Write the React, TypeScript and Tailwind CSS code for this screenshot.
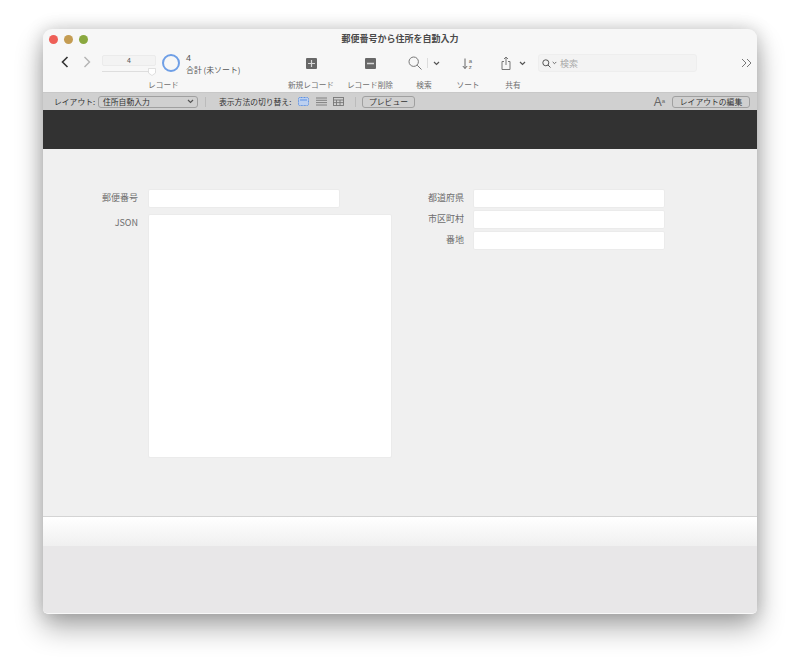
import React from "react";

const font = { fontFamily: '"Noto Sans CJK JP", "Liberation Sans", sans-serif' };

function ToolItem({ w, label, children }: { w: string; label: string; children: React.ReactNode }) {
  return (
    <div className={`flex flex-col items-center ${w}`}>
      <div className="h-[26px] flex items-center justify-center">{children}</div>
      <div className="mt-[3px] text-[7.7px] leading-[12px] text-[#6f6f6f] whitespace-nowrap">{label}</div>
    </div>
  );
}

function Chevron({ className }: { className?: string }) {
  return (
    <svg className={className} width="7" height="5" viewBox="0 0 7 5" fill="none" stroke="#555" strokeWidth="1.2">
      <path d="M1 1l2.5 2.5L6 1" />
    </svg>
  );
}

function Field({ label, w, h, mt }: { label: string; w: string; h: string; mt?: string }) {
  return (
    <div className={`flex items-start ${mt ?? ""}`}>
      <div className="w-[60px] text-right text-[9px] leading-[17px] text-[#6e6e6e] whitespace-nowrap">{label}</div>
      <div className={`ml-[10px] bg-white rounded-[2px] border border-[#ebebeb] ${w} ${h}`} />
    </div>
  );
}

function RightField({ label, mt }: { label: string; mt?: string }) {
  return (
    <div className={`flex items-start ${mt ?? ""}`}>
      <div className="w-[52px] text-right text-[9px] leading-[17px] text-[#6e6e6e] whitespace-nowrap">{label}</div>
      <div className="ml-[9px] w-[192px] h-[19px] bg-white rounded-[2px] border border-[#ebebeb]" />
    </div>
  );
}

export default function App() {
  return (
    <div className="w-[800px] h-[671px] bg-white pt-[29px] pl-[43px] overflow-hidden" style={font}>
      <div className="w-[714px] h-[585px] flex flex-col rounded-t-[9px] rounded-b-[5px] overflow-hidden bg-[#efefef] border-b border-[#f8f8f8] shadow-[0_14px_28px_rgba(0,0,0,0.32),0_0_18px_rgba(0,0,0,0.18)]">
        {/* Title + toolbar */}
        <div className="h-[63px] bg-[#f7f7f7] flex flex-col shrink-0">
          <div className="relative h-[20px] shrink-0 flex items-center justify-center">
            <div className="absolute left-[6px] top-[6px] flex gap-[6px]">
              <div className="w-[9px] h-[9px] rounded-full bg-[#ee5f57]" />
              <div className="w-[9px] h-[9px] rounded-full bg-[#c49c52]" />
              <div className="w-[9px] h-[9px] rounded-full bg-[#8aa83f]" />
            </div>
            <span className="text-[9px] font-bold text-[#4a4a4a]">郵便番号から住所を自動入力</span>
          </div>
          <div className="flex items-start">
            {/* nav */}
            <div className="ml-[18px] mt-[6px] flex items-center gap-[14px] h-[14px]">
              <svg width="8" height="12" viewBox="0 0 8 12" fill="none" stroke="#333" strokeWidth="1.6">
                <path d="M6.5 1L1.5 6l5 5" />
              </svg>
              <svg width="8" height="12" viewBox="0 0 8 12" fill="none" stroke="#b4b4b4" strokeWidth="1.4">
                <path d="M1.5 1l5 5-5 5" />
              </svg>
            </div>
            {/* record */}
            <div className="ml-[11px] w-[54px] mt-[6px] flex flex-col">
              <div className="h-[11px] rounded-[2px] bg-[#f3f3f3] border border-[#ebebeb] flex items-center justify-center text-[7px] leading-none text-[#555]">4</div>
              <div className="relative h-[10px]">
                <div className="absolute left-0 right-0 top-[5px] h-[1px] bg-[#dedede]" />
                <svg className="absolute right-0 top-[2px]" width="8" height="8" viewBox="0 0 8 8">
                  <path d="M0.5 0.5h7v4.5L4 7.5 0.5 5z" fill="#fff" stroke="#d4d4d4" strokeWidth="0.7" />
                </svg>
              </div>
              <div className="relative mt-[3px] h-[12px] w-[80px]">
                <span className="absolute left-[46px] top-0 text-[7.7px] leading-[12px] text-[#6f6f6f] whitespace-nowrap">レコード</span>
              </div>
            </div>
            <div className="ml-[6px] mt-[5px] w-[18px] h-[18px] rounded-full border-2 border-[#6f9fe6]" />
            <div className="ml-[6px] mt-[4px] w-[64px] text-[#555]">
              <div className="text-[9px] leading-[11px]" style={{ fontFamily: '"Liberation Sans", sans-serif' }}>4</div>
              <div className="text-[7.9px] leading-[11px] whitespace-nowrap">合計 (未ソート)</div>
            </div>
            {/* tools */}
            <div className="ml-[32px] pt-[1px] flex">
              <ToolItem w="w-[58px]" label="新規レコード">
                <svg width="11" height="11" viewBox="0 0 11 11">
                  <rect width="11" height="11" rx="1" fill="#686868" />
                  <path d="M5.5 2v7M2 5.5h7" stroke="#d8d8d8" strokeWidth="1.2" />
                </svg>
              </ToolItem>
              <ToolItem w="w-[60px]" label="レコード削除">
                <svg width="11" height="11" viewBox="0 0 11 11">
                  <rect width="11" height="11" rx="1" fill="#686868" />
                  <path d="M2 5.5h7" stroke="#d8d8d8" strokeWidth="1.4" />
                </svg>
              </ToolItem>
              <ToolItem w="w-[48px]" label="検索">
                <svg width="14" height="14" viewBox="0 0 14 14" fill="none" stroke="#777" strokeWidth="1">
                  <circle cx="5.7" cy="5.7" r="4.7" />
                  <path d="M9.2 9.2l4.3 4.3" />
                </svg>
                <div className="ml-[5px] w-[1px] h-[10px] bg-[#dcdcdc]" />
                <Chevron className="ml-[5px]" />
              </ToolItem>
              <ToolItem w="w-[40px]" label="ソート">
                <svg width="12" height="13" viewBox="0 0 12 13" fill="none" stroke="#666" strokeWidth="1">
                  <path d="M3 1.5v10M0.8 9L3 11.5 5.2 9" />
                  <text x="6.8" y="5.5" fontSize="6" fill="#666" stroke="none" style={{ fontFamily: '"Liberation Sans", sans-serif' }}>a</text>
                  <text x="6.8" y="12" fontSize="6" fill="#666" stroke="none" style={{ fontFamily: '"Liberation Sans", sans-serif' }}>z</text>
                </svg>
              </ToolItem>
              <ToolItem w="w-[50px]" label="共有">
                <svg width="10" height="14" viewBox="0 0 10 14" fill="none" stroke="#777" strokeWidth="1">
                  <path d="M3 5.5H1v8h8v-8H7M5 9V1M3 3l2-2 2 2" />
                </svg>
                <Chevron className="ml-[8px]" />
              </ToolItem>
            </div>
            {/* search */}
            <div className="mt-[5px] w-[159px] h-[18px] rounded-[3px] bg-[#f3f3f3] border border-[#eeeeee] flex items-center pl-[3px]">
              <svg width="9" height="9" viewBox="0 0 9 9" fill="none" stroke="#555" strokeWidth="1">
                <circle cx="3.8" cy="3.8" r="3" />
                <path d="M6 6l2.5 2.5" />
              </svg>
              <svg className="ml-[1px]" width="5" height="4" viewBox="0 0 7 5" fill="none" stroke="#555" strokeWidth="1.2">
                <path d="M1 1l2.5 2.5L6 1" />
              </svg>
              <span className="ml-[3px] text-[9px] leading-none text-[#aaa]">検索</span>
            </div>
            <svg className="ml-[44px] mt-[9px]" width="11" height="10" viewBox="0 0 11 10" fill="none" stroke="#777" strokeWidth="1">
              <path d="M1 1l4 4-4 4M6 1l4 4-4 4" />
            </svg>
          </div>
        </div>

        {/* Layout bar */}
        <div className="h-[18px] shrink-0 bg-[#d0d0d0] flex items-center text-[7.8px] text-[#333] border-t border-[#c8c8c8]">
          <span className="ml-[11px] w-[41px] whitespace-nowrap">レイアウト:</span>
          <div className="ml-[3px] w-[100px] h-[12px] rounded-[3px] border border-[#a0a0a0] flex items-center justify-between pl-[4px] pr-[3px]">
            <span className="leading-none whitespace-nowrap">住所自動入力</span>
            <Chevron />
          </div>
          <div className="ml-[7px] w-[1px] h-[10px] bg-[#bbb]" />
          <span className="ml-[13px] w-[73px] whitespace-nowrap">表示方法の切り替え:</span>
          <svg className="ml-[6px]" width="11" height="9" viewBox="0 0 11 9">
            <rect x="0.5" y="0.5" width="10" height="8" rx="1" fill="#bcd0f0" stroke="#5b90e4" strokeDasharray="1 0.5" />
            <path d="M2 3h7" stroke="#5b90e4" />
          </svg>
          <svg className="ml-[7px]" width="11" height="9" viewBox="0 0 11 9" stroke="#777" strokeWidth="0.9">
            <path d="M0 1h11M0 3.3h11M0 5.6h11M0 8h11" />
          </svg>
          <svg className="ml-[6px]" width="11" height="9" viewBox="0 0 11 9" fill="none" stroke="#777" strokeWidth="0.9">
            <rect x="0.5" y="0.5" width="10" height="8" />
            <path d="M0 3h11M0 5.6h11M3.5 3v6M7 3v6" />
          </svg>
          <div className="ml-[11px] w-[1px] h-[10px] bg-[#bbb]" />
          <div className="ml-[6px] w-[53px] h-[12px] rounded-[3px] border border-[#a0a0a0] flex items-center justify-center leading-none whitespace-nowrap">プレビュー</div>
          <span className="ml-auto text-[12px] leading-none text-[#666]" style={{ fontFamily: '"Liberation Sans", sans-serif' }}>A<sup className="text-[6px]">a</sup></span>
          <div className="ml-[7px] mr-[7px] w-[78px] h-[12px] rounded-[3px] border border-[#a0a0a0] flex items-center justify-center leading-none whitespace-nowrap">レイアウトの編集</div>
        </div>

        {/* Header band */}
        <div className="h-[39px] shrink-0 bg-[#323232]" />

        {/* Body */}
        <div className="h-[367px] shrink-0 bg-[#f0f0f0] flex pt-[40px] pl-[35px]">
          <div className="w-[334px] flex flex-col">
            <Field label="郵便番号" w="w-[192px]" h="h-[19px]" />
            <Field label="JSON" w="w-[244px]" h="h-[244px]" mt="mt-[6px]" />
          </div>
          <div className="flex flex-col">
            <RightField label="都道府県" />
            <RightField label="市区町村" mt="mt-[2px]" />
            <RightField label="番地" mt="mt-[2px]" />
          </div>
        </div>

        {/* Footer */}
        <div className="h-[30px] shrink-0 border-t border-[#d4d4d4] bg-gradient-to-b from-white to-[#f0f0f0]" />
        <div className="flex-1 bg-[#e8e7e8]" />
      </div>
    </div>
  );
}
